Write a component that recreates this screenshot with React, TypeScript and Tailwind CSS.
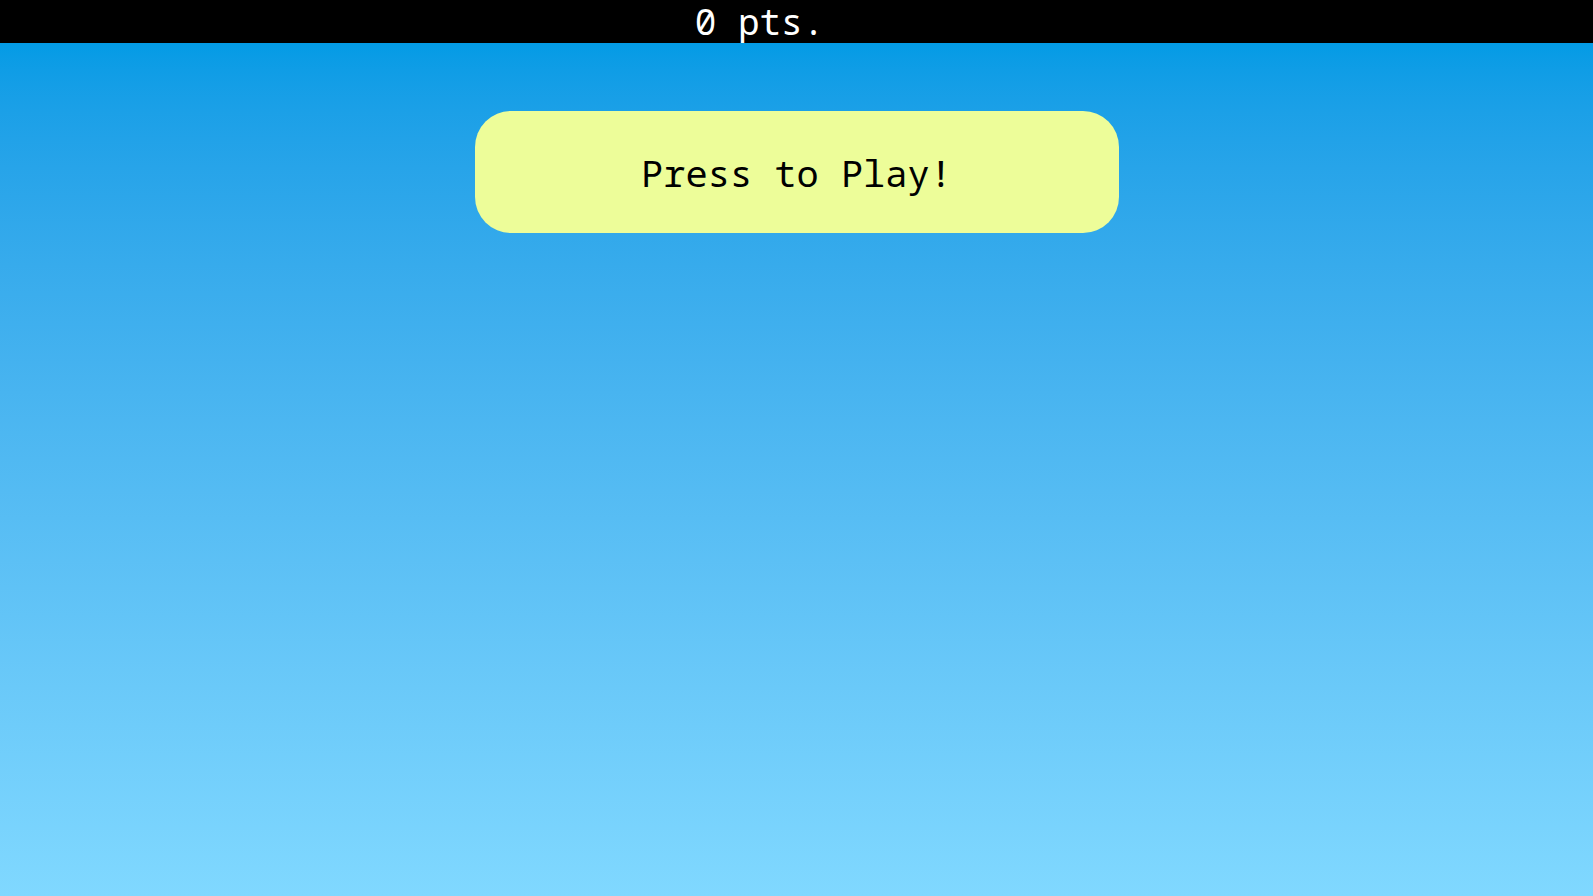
const App = () => {
    return (
        <div className="flex flex-col h-screen w-full" style={{fontFamily: '"Noto Sans Mono", "DejaVu Sans Mono", monospace'}}>
            <div className="h-[43px] bg-black flex items-center justify-center shrink-0 overflow-hidden">
                <span className="text-white text-[36px] leading-[43px] mr-[74px]">0 pts.</span>
            </div>
            <div className="flex-1 flex flex-col items-center bg-gradient-to-b from-[#039be5] to-[#80d8ff] pt-[68px]">
                <button className="w-[644px] h-[122px] rounded-[36px] bg-[#edfd99] text-black text-[37px] flex items-center justify-center pt-[2px]">
                    Press to Play!
                </button>
            </div>
        </div>
    );
};

export default App;
